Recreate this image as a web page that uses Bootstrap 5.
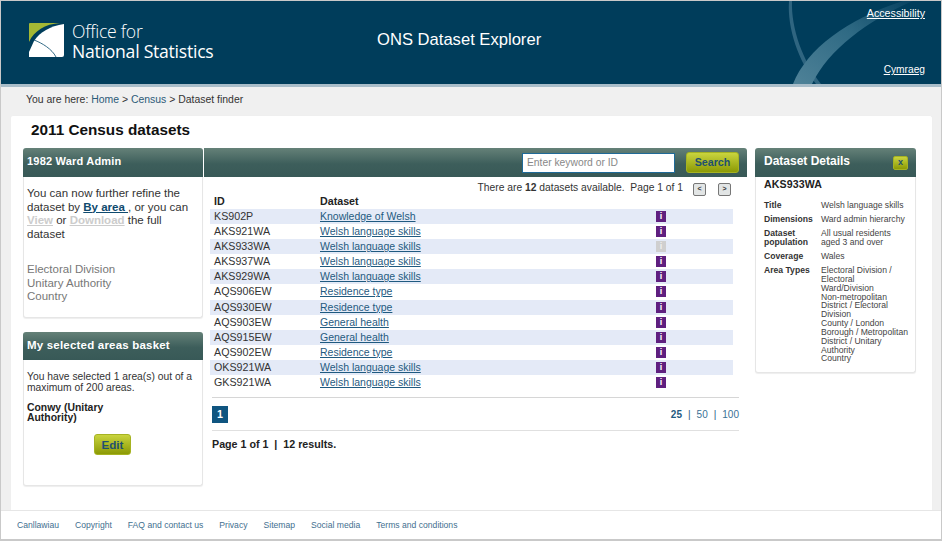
<!DOCTYPE html>
<html lang="en"><head><meta charset="utf-8"><title>ONS Dataset Explorer</title>
<link href="https://cdn.jsdelivr.net/npm/bootstrap@5.3.0/dist/css/bootstrap.min.css" rel="stylesheet">
<style>
html,body{height:541px;overflow:hidden}
body{font-family:"Liberation Sans",Arial,sans-serif;font-size:10.7px;color:#333;background:#fff}
a{color:#1f5a80}
.frame{height:541px;border:1px solid #c9c9c9;border-bottom-width:2px;display:flex;flex-direction:column;background:#f0f0f0}
.masthead{height:83px;background:#003d5b;border-bottom:3px solid #a9bdc9;box-sizing:content-box;position:relative;flex:none}
.swoosh{position:absolute;left:0;top:0;width:100%;height:100%}
.logo-box{position:absolute;left:27px;top:21px;display:flex;gap:8px;align-items:flex-start}
.logo-txt{font-family:"Open Sans",sans-serif;color:#fff;font-size:17.6px;line-height:20px;margin-top:-1px;letter-spacing:-.25px}
.logo-txt span{display:block}
.logo-txt .thin{font-weight:300}
.logo-txt .reg{font-weight:400}
.site-title{position:absolute;left:376px;top:29px;color:#fff;font-size:16.6px;line-height:20px}
.top-link{position:absolute;right:16px;color:#fff;font-size:10.7px;line-height:13px}
.top-a{top:6px}
.top-b{top:62px;font-size:10.2px}
.crumbs{height:27px;padding:6px 0 0 25px;color:#333;flex:none;font-size:10.45px;line-height:13px}
.crumbs a{color:#2b5a78;text-decoration:none}
.sheet{flex:1;margin:1px 8px 0 9px;background:#fff;border:1px solid #efefef;border-bottom:0;border-radius:3px 3px 0 0;padding:0 11px 0 12px;min-height:0}
.sheet-title{font-size:15.3px;font-weight:700;color:#111;margin:0;line-height:18px;padding:5px 0 0 8px;height:32px}
.cols{display:flex;align-items:flex-start}
.left-col{width:180px;flex:none}
.mid-col{width:544px;flex:none}
.right-col{width:161px;flex:none;margin-left:8px}
.tbar{background:linear-gradient(#658178,#3d5e5b 55%,#385957);color:#fff;font-weight:700;border-radius:3px 3px 0 0;height:29px;display:flex;align-items:center}
.pane{border:1px solid #e6e6e6;border-top:0;border-radius:0 0 3px 3px;background:#fff;box-shadow:0 1px 1px #eee}
.areas-pane{height:141px;padding:10px 4px 0 3px;font-size:11.5px;line-height:13.5px;color:#333}
.left-head{padding:0 0 2px 4px;font-size:11px;letter-spacing:.2px}
.greyed{color:#ccc;font-weight:700}
.active-lnk{color:#0f4a6e;font-weight:700}
.levels{color:#777;margin-top:22px}
.basket{margin-top:14px}
.basket .tbar{height:28px;font-size:11.5px;padding-bottom:1px}
.basket-pane{height:126px;padding:12px 4px 0 3px;font-size:10.3px;line-height:10.5px}
.basket-name{font-weight:700;font-size:10.4px;line-height:10px;color:#222;margin:10px 0 0;width:90px}
.oli{background:linear-gradient(#c9d43e,#8c9a05);border:1px solid #a6b322;border-radius:3px;color:#1f5070;font-weight:700;padding:0;line-height:1}
.oli:hover{background:#8c9a05;color:#1f5070;border-color:#a6b322}
.edit-btn{display:block;width:37px;height:21px;margin:11px auto 0 67px;font-size:11.6px}
.mid-col .tbar{justify-content:flex-end;padding-right:8px;border-radius:0 3px 0 0;border-left:1px solid #fff}
.kw{width:153px;height:20px;border:1px solid #1f6a98;border-radius:0;font-size:10.3px;padding:0 4px;background:#fff;color:#888;margin-right:11px;box-shadow:none;min-height:0}
.kw::placeholder{color:#888;opacity:1}
.search-btn{width:53px;height:21px;font-size:10.7px}
.pager-info{height:32px;padding:4px 16px 0 0;display:flex;justify-content:flex-end;align-items:flex-start;font-size:10.3px;line-height:14px;color:#333}
.arrow{width:13px;height:13px;border:1px solid #777;border-radius:2px;background:#e2e5e5;font-size:7px;line-height:10px;text-align:center;color:#333;font-weight:700;margin-top:2px}
.arrow-a{margin-left:10px}
.arrow-b{margin-left:12px}
.ds-table{margin:0 0 0 7px;width:523px;border-collapse:collapse;table-layout:fixed;font-size:10.7px;color:#333}
.ds-table td{padding:0 0 0 4px;height:15.1px;line-height:15px;border:0;background:transparent;box-shadow:none;color:#333;vertical-align:top}
.ds-table a{font-size:10.5px}
.ds-table tbody tr:nth-child(odd) td{background:#e4eaf7}
.ds-table .c1{width:106px}
.ds-table .c2{width:336px}
.info-i{display:block;width:10px;height:11px;margin:2px 0 0 0;background:#5f1f7f;color:#fff;font-size:9px;font-weight:700;line-height:11px;text-align:center}
.info-off{background:#cfcfcf;color:#eee}
.heads{display:flex;margin-left:11px;font-weight:700;color:#222;line-height:12px;margin-top:-14px;height:12px;margin-bottom:2px}
.heads span:first-child{width:106px}
.pg-row{margin:7px 8px 0 9px;border-top:1px solid #d6d6d6;border-bottom:1px solid #e0e0e0;height:34px;display:flex;justify-content:space-between;align-items:center}
.pg-num{background:#0f5580;color:#fff;font-weight:700;width:16px;height:17px;text-align:center;line-height:17px}
.per-page{font-size:10px}
.per-page a{text-decoration:none;color:#3a7196}
.per-page b{color:#1f5a80}
.per-page i{font-style:normal;color:#1f5a80;margin:0 6px}
.results{margin:7px 0 0 9px;font-weight:700;color:#222;line-height:13px}
.detail-head{padding:0 8px 0 9px;justify-content:space-between;font-size:12px}
.detail-head span{margin-bottom:4px}
.x-btn{width:15px;height:14px;font-size:9px;border-radius:2px;display:block;text-align:center;line-height:11px}
.detail-pane{height:196px;padding:0 4px 0 8px;font-size:8.6px;line-height:8.85px;color:#444}
.detail-id{font-size:10.6px;font-weight:700;color:#222;line-height:14px;margin-bottom:10px;letter-spacing:.1px}
.dl-row{display:flex;margin-bottom:5.2px}
.dl-row b{width:57px;flex:none;color:#333;font-weight:700}
.foot{height:29px;background:#fff;border-top:1px solid #e6e6e6;flex:none;display:flex;align-items:center;padding:1px 0 0 16px;gap:16px;font-size:8.6px}
.foot a{text-decoration:none;color:#3f6f8f}
</style></head>
<body>
<div class="frame">
<header class="masthead">
<svg class="swoosh" viewBox="0 0 940 83" preserveAspectRatio="none" aria-hidden="true">
<defs><linearGradient id="band" x1="0" y1="1" x2="1" y2="0"><stop offset="0" stop-color="#4f8298"/><stop offset=".55" stop-color="#2f6a84"/><stop offset="1" stop-color="#074261"/></linearGradient></defs>
<path d="M791 0C790 28 802 60 820 83L815 83C798 60 786 28 788 0Z" fill="#2f6580"/>
<path d="M792 83C806 48 846 18 902 0L912 0C866 20 828 48 811 83Z" fill="url(#band)"/>
</svg>
<div class="logo-box">
<svg width="36" height="36" viewBox="0 0 36 36" aria-hidden="true">
<path d="M1 2Q1 1 2 1H32C17 2 6 9 1 20Z" fill="#a4b834"/>
<path d="M36 2V33Q36 35 34 35H1V30L6 19C12 10 22 4 36 2Z" fill="#fff"/>
<path d="M6 18C14 21 24 27 28 35" fill="none" stroke="#1d5a78" stroke-width=".9"/>
</svg>
<div class="logo-txt"><span class="thin">Office for</span><span class="reg">National Statistics</span></div>
</div>
<div class="site-title">ONS Dataset Explorer</div>
<a href="#" class="top-link top-a">Accessibility</a>
<a href="#" class="top-link top-b">Cymraeg</a>
</header>
<div class="crumbs">You are here: <a href="#">Home</a> &gt; <a href="#">Census</a> &gt; Dataset finder</div>
<main class="sheet">
<h1 class="sheet-title">2011 Census datasets</h1>
<div class="cols">
<aside class="left-col">
<div class="tbar left-head">1982 Ward Admin</div>
<div class="pane areas-pane">
<div>You can now further refine the dataset by <a href="#" class="active-lnk">By area </a>, or you can <a href="#" class="greyed">View</a> or <a href="#" class="greyed">Download</a> the full dataset</div>
<div class="levels">Electoral Division<br>Unitary Authority<br>Country</div>
</div>
<div class="basket">
<div class="tbar left-head">My selected areas basket</div>
<div class="pane basket-pane">
<div>You have selected 1 area(s) out of a maximum of 200 areas.</div>
<div class="basket-name">Conwy (Unitary Authority)</div>
<button type="button" class="btn oli edit-btn">Edit</button>
</div>
</div>
</aside>
<section class="mid-col">
<div class="tbar">
<input class="form-control kw" type="text" placeholder="Enter keyword or ID">
<button type="button" class="btn oli search-btn">Search</button>
</div>
<div class="pager-info"><span>There are <b>12</b> datasets available.&nbsp; Page 1 of 1</span><span class="arrow arrow-a">&lt;</span><span class="arrow arrow-b">&gt;</span></div>
<div class="heads"><span>ID</span><span>Dataset</span></div>
<table class="table ds-table">
<colgroup><col class="c1"><col class="c2"><col></colgroup>
<tbody>
<tr><td>KS902P</td><td><a href="#">Knowledge of Welsh</a></td><td><span class="info-i">i</span></td></tr>
<tr><td>AKS921WA</td><td><a href="#">Welsh language skills</a></td><td><span class="info-i">i</span></td></tr>
<tr><td>AKS933WA</td><td><a href="#">Welsh language skills</a></td><td><span class="info-i info-off">i</span></td></tr>
<tr><td>AKS937WA</td><td><a href="#">Welsh language skills</a></td><td><span class="info-i">i</span></td></tr>
<tr><td>AKS929WA</td><td><a href="#">Welsh language skills</a></td><td><span class="info-i">i</span></td></tr>
<tr><td>AQS906EW</td><td><a href="#">Residence type</a></td><td><span class="info-i">i</span></td></tr>
<tr><td>AQS930EW</td><td><a href="#">Residence type</a></td><td><span class="info-i">i</span></td></tr>
<tr><td>AQS903EW</td><td><a href="#">General health</a></td><td><span class="info-i">i</span></td></tr>
<tr><td>AQS915EW</td><td><a href="#">General health</a></td><td><span class="info-i">i</span></td></tr>
<tr><td>AQS902EW</td><td><a href="#">Residence type</a></td><td><span class="info-i">i</span></td></tr>
<tr><td>OKS921WA</td><td><a href="#">Welsh language skills</a></td><td><span class="info-i">i</span></td></tr>
<tr><td>GKS921WA</td><td><a href="#">Welsh language skills</a></td><td><span class="info-i">i</span></td></tr>
</tbody></table>
<div class="pg-row"><span class="pg-num">1</span><span class="per-page"><a href="#"><b>25</b></a><i>|</i><a href="#">50</a><i>|</i><a href="#">100</a></span></div>
<div class="results">Page 1 of 1&nbsp; |&nbsp; 12 results.</div>
</section>
<aside class="right-col">
<div class="tbar detail-head"><span>Dataset Details</span><button type="button" class="btn oli x-btn">x</button></div>
<div class="pane detail-pane">
<div class="detail-id">AKS933WA</div>
<div class="dl-row"><b>Title</b><span>Welsh language skills</span></div>
<div class="dl-row"><b>Dimensions</b><span>Ward admin hierarchy</span></div>
<div class="dl-row"><b>Dataset population</b><span>All usual residents aged 3 and over</span></div>
<div class="dl-row"><b>Coverage</b><span>Wales</span></div>
<div class="dl-row"><b>Area Types</b><span>Electoral Division / Electoral<br>Ward/Division<br>Non-metropolitan<br>District / Electoral Division<br>County / London Borough / Metropolitan<br>District / Unitary Authority<br>Country</span></div>
</div>
</aside>
</div>
</main>
<footer class="foot"><a href="#">Canllawiau</a><a href="#">Copyright</a><a href="#">FAQ and contact us</a><a href="#">Privacy</a><a href="#">Sitemap</a><a href="#">Social media</a><a href="#">Terms and conditions</a></footer>
</div>
<script src="https://cdn.jsdelivr.net/npm/bootstrap@5.3.0/dist/js/bootstrap.bundle.min.js"></script>
</body></html>
